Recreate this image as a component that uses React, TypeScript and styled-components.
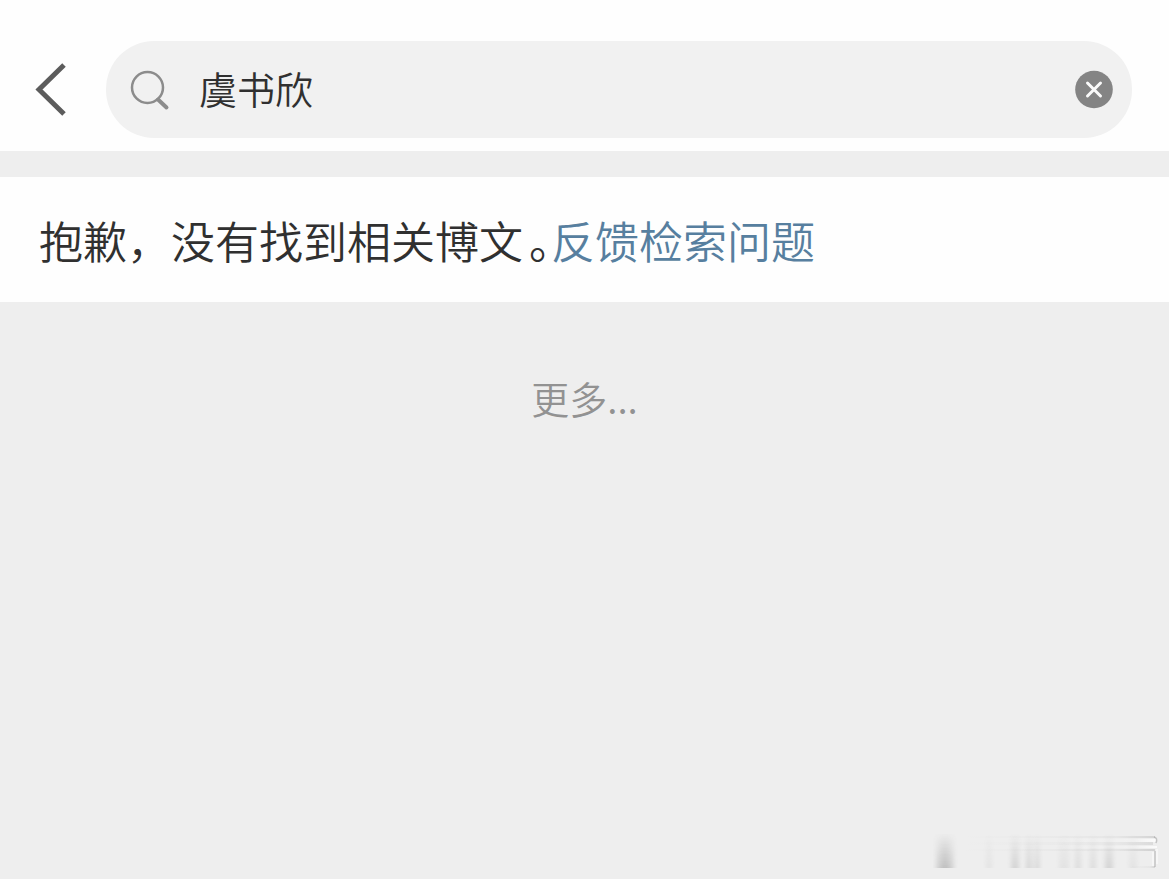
import React, { useState } from "react";
import styled, { createGlobalStyle } from "styled-components";

const GlobalStyle = createGlobalStyle`
  *, *::before, *::after { box-sizing: border-box; }
  html, body, #root { min-height: 100vh; }
  body {
    margin: 0;
    background: #eeeeee;
    color: #303030;
    font-family: "Noto Sans CJK SC", sans-serif;
    font-weight: 350;
  }
`;

const Page = styled.div`
  min-height: 100vh;
  display: flex;
  flex-direction: column;
`;

const Header = styled.header`
  display: flex;
  align-items: center;
  gap: 36px;
  padding: 41px 37px 13px 32px;
  background: #fefefe;
`;

const IconButton = styled.button`
  display: flex;
  flex: none;
  padding: 0;
  border: 0;
  background: none;
  cursor: pointer;
`;

const SearchForm = styled.form`
  flex: 1;
  min-width: 0;
  height: 97px;
  display: flex;
  align-items: center;
  padding: 0 18px 0 24px;
  border-radius: 48px;
  background: #f1f1f1;
`;

const SearchInput = styled.input`
  flex: 1;
  min-width: 0;
  height: 60px;
  margin-left: 27px;
  padding: 0 0 4px;
  border: 0;
  outline: 0;
  background: transparent;
  color: #303030;
  font-family: inherit;
  font-size: 38px;
  font-weight: inherit;
`;

const Result = styled.main`
  margin-top: 26px;
  padding: 32px 39px 31px;
  background: #fefefe;
`;

const Message = styled.p`
  margin: 0;
  font-size: 44px;
  line-height: 62px;
`;

const Stop = styled.span`
  margin-left: 6px;
  font-feature-settings: "halt";
`;

const FeedbackLink = styled.a`
  color: #577f9f;
  text-decoration: none;
`;

const MoreButton = styled.button`
  align-self: center;
  margin-top: 68px;
  padding: 0;
  border: 0;
  background: none;
  color: #929292;
  font-family: inherit;
  font-size: 38px;
  font-weight: inherit;
  line-height: 56px;
  cursor: pointer;
`;

const Footer = styled.footer`
  display: flex;
  justify-content: flex-end;
  margin-top: auto;
  padding: 0 10px 10px;
`;

const streaks = [
  { x: 3, w: 18, o: 0.2 },
  { x: 8, w: 8, o: 0.16 },
  { x: 53, w: 6, o: 0.07 },
  { x: 78, w: 8, o: 0.18 },
  { x: 93, w: 6, o: 0.16 },
  { x: 101, w: 6, o: 0.14 },
  { x: 126, w: 10, o: 0.08 },
  { x: 142, w: 6, o: 0.12 },
  { x: 157, w: 6, o: 0.12 },
  { x: 172, w: 8, o: 0.18 },
  { x: 196, w: 8, o: 0.07 },
];

function Watermark() {
  return (
    <svg width="226" height="40" viewBox="0 0 226 40" aria-hidden="true">
      <defs>
        <linearGradient id="fall" x1="0" y1="0" x2="0" y2="1">
          <stop offset="0" stopColor="#666" stopOpacity="0" />
          <stop offset="1" stopColor="#666" />
        </linearGradient>
        <linearGradient id="shade" x1="0" y1="0" x2="1" y2="0">
          <stop offset="0" stopColor="#999" stopOpacity="0" />
          <stop offset="0.8" stopColor="#999" stopOpacity="0.3" />
          <stop offset="1" stopColor="#999" />
        </linearGradient>
        <linearGradient id="light" x1="0" y1="0" x2="1" y2="0">
          <stop offset="0" stopColor="#fff" stopOpacity="0" />
          <stop offset="0.8" stopColor="#fff" stopOpacity="0.3" />
          <stop offset="1" stopColor="#fff" />
        </linearGradient>
        <filter id="soft" x="-50%" width="200%" y="-5%" height="110%">
          <feGaussianBlur stdDeviation="2 0" />
        </filter>
      </defs>
      {streaks.map((s) => (
        <rect key={s.x} x={s.x} y="4" width={s.w} height="35" fill="url(#fall)" opacity={s.o} filter="url(#soft)" />
      ))}
      <rect x="30" y="7" width="192" height="2" fill="url(#shade)" opacity="0.3" />
      <rect x="120" y="10" width="103" height="3" fill="url(#light)" opacity="0.8" />
      <rect x="30" y="13" width="190" height="3" fill="url(#shade)" opacity="0.22" />
      <rect x="120" y="17" width="104" height="2" fill="url(#light)" opacity="0.8" />
      <rect x="30" y="20" width="192" height="2" fill="url(#shade)" opacity="0.35" />
      <rect x="196" y="37" width="26" height="2" fill="url(#shade)" opacity="0.3" />
      <path d="M221 8q4 1 2 6M222 22v16" fill="none" stroke="#999" strokeWidth="1.500" opacity="0.5" />
      <path d="M220 23v14M224 20v15" fill="none" stroke="#fff" strokeWidth="1.500" opacity="0.6" />
    </svg>
  );
}

export default function App() {
  const [query, setQuery] = useState("虞书欣");

  return (
    <Page>
      <GlobalStyle />
      <Header>
        <IconButton type="button" aria-label="返回">
          <svg width="38" height="56" viewBox="0 0 38 56" fill="none" stroke="#5c5c5c" strokeWidth="5">
            <path d="M32 3 7 27.500 32 52" />
          </svg>
        </IconButton>
        <SearchForm role="search" onSubmit={(e) => e.preventDefault()}>
          <svg width="42" height="42" viewBox="0 0 42 42" fill="none" stroke="#8c8c8c" aria-hidden="true">
            <circle cx="17.500" cy="18.500" r="15.500" strokeWidth="2.500" />
            <path d="m28 30.500 8.500 8" strokeWidth="4" strokeLinecap="round" />
          </svg>
          <SearchInput aria-label="搜索" value={query} onChange={(e) => setQuery(e.target.value)} />
          <IconButton type="button" aria-label="清除" onClick={() => setQuery("")}>
            <svg width="40" height="40" viewBox="0 0 40 40">
              <circle cx="20" cy="19.500" r="18.800" fill="#848484" />
              <path d="m13.500 13 13 13m0-13-13 13" stroke="#fafafa" strokeWidth="3" strokeLinecap="round" />
            </svg>
          </IconButton>
        </SearchForm>
      </Header>
      <Result>
        <Message>
          抱歉，没有找到相关博文<Stop>。</Stop>
          <FeedbackLink href="#feedback">反馈检索问题</FeedbackLink>
        </Message>
      </Result>
      <MoreButton type="button">更多...</MoreButton>
      <Footer>
        <Watermark />
      </Footer>
    </Page>
  );
}
